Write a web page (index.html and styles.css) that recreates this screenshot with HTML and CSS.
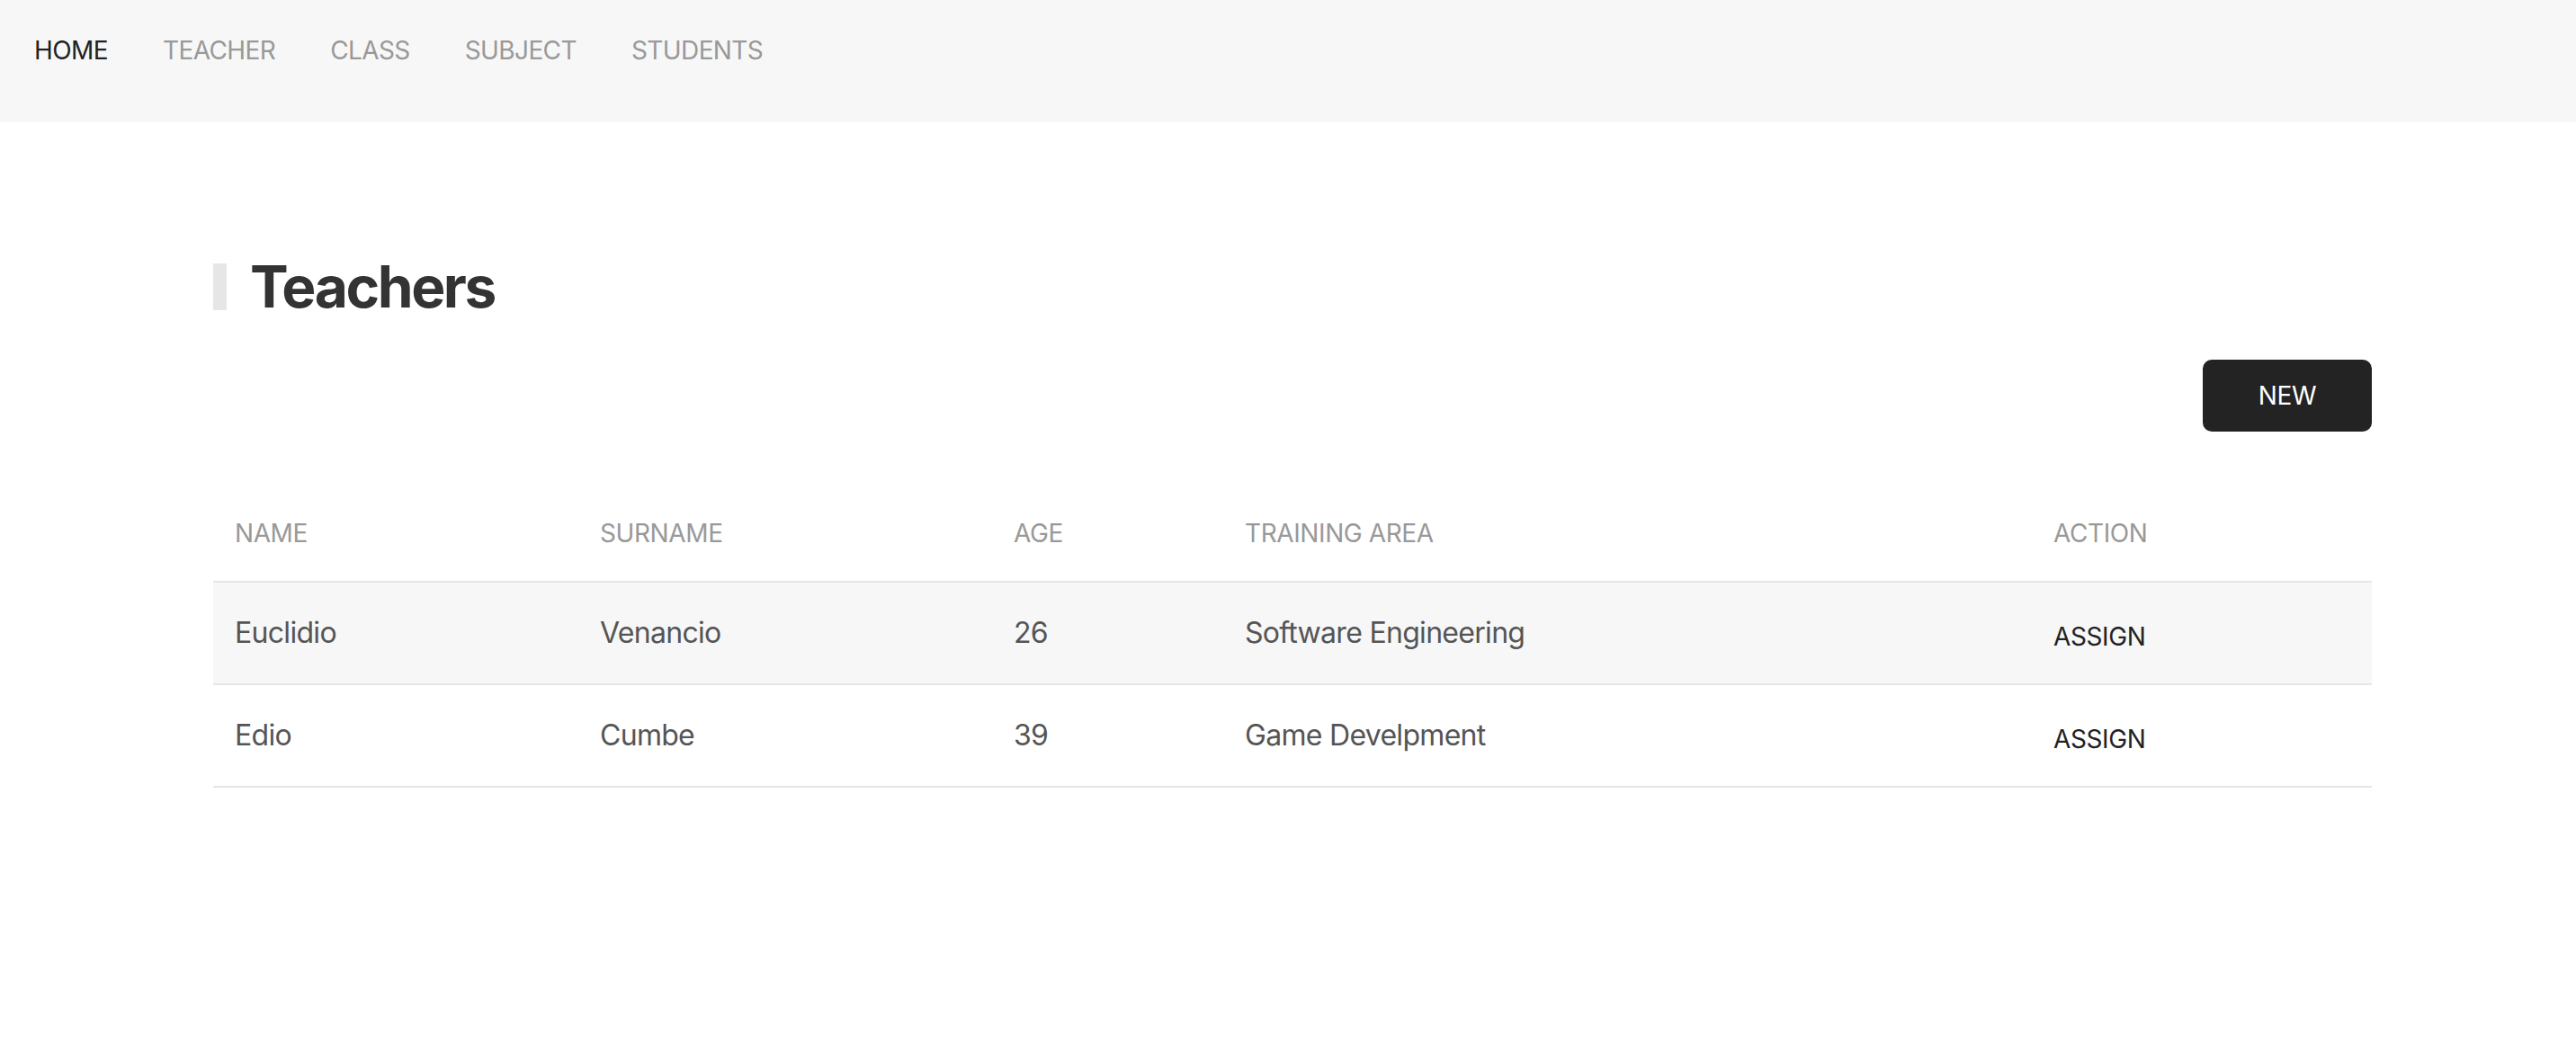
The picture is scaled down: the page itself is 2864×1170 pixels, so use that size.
FILE: index.html
```html
<!DOCTYPE html>
<html lang="en">
<head>
<meta charset="utf-8">
<title>Teachers</title>
<link rel="stylesheet" href="styles.css">
</head>
<body>
<nav class="topnav">
  <a class="nav-link active" href="#">HOME</a>
  <a class="nav-link" href="#">TEACHER</a>
  <a class="nav-link" href="#">CLASS</a>
  <a class="nav-link" href="#">SUBJECT</a>
  <a class="nav-link" href="#">STUDENTS</a>
</nav>
<main class="container">
  <h1 class="page-title">Teachers</h1>
  <div class="toolbar">
    <button class="btn-new" type="button">NEW</button>
  </div>
  <table class="data-table">
    <colgroup>
      <col class="c-name"><col class="c-surname"><col class="c-age"><col class="c-area"><col class="c-action">
    </colgroup>
    <thead>
      <tr><th>NAME</th><th>SURNAME</th><th>AGE</th><th>TRAINING AREA</th><th>ACTION</th></tr>
    </thead>
    <tbody>
      <tr class="striped"><td>Euclidio</td><td>Venancio</td><td>26</td><td>Software Engineering</td><td><button class="btn-assign" type="button">ASSIGN</button></td></tr>
      <tr><td>Edio</td><td>Cumbe</td><td>39</td><td>Game Develpment</td><td><button class="btn-assign" type="button">ASSIGN</button></td></tr>
    </tbody>
  </table>
</main>
</body>
</html>
```
FILE: styles.css
```css
html, body {
  margin: 0;
  padding: 0;
  background: #ffffff;
  font-family: Inter, "Noto Sans", "Liberation Sans", sans-serif;
}

.topnav {
  height: 136px;
  box-sizing: border-box;
  background: #f7f7f7;
  padding: 35px 0 0 38px;
  display: flex;
  align-items: flex-start;
  gap: 61px;
}

.nav-link {
  font-size: 28px;
  line-height: 42px;
  color: #999999;
  text-decoration: none;
  letter-spacing: -0.6px;
}

.nav-link.active {
  color: #222222;
}

.container {
  width: 2400px;
  margin: 0 0 0 237px;
  padding-top: 157px;
}

.page-title {
  margin: 0;
  border-left: 15px solid #e6e6e6;
  padding-left: 26px;
  font-size: 64px;
  line-height: 52px;
  font-weight: 700;
  color: #333333;
  letter-spacing: -2.4px;
}

.toolbar {
  display: flex;
  justify-content: flex-end;
  margin-top: 55px;
}

.btn-new {
  width: 188px;
  height: 80px;
  border: none;
  border-radius: 10px;
  background: #232323;
  color: #ffffff;
  font-family: inherit;
  font-size: 28px;
  letter-spacing: -0.4px;
  cursor: pointer;
}

.data-table {
  width: 2400px;
  margin-top: 60px;
  border-collapse: collapse;
  table-layout: fixed;
}

.c-name { width: 406px; }
.c-surname { width: 460px; }
.c-age { width: 257px; }
.c-area { width: 899px; }
.c-action { width: 378px; }

.data-table th {
  text-align: left;
  font-weight: 400;
  font-size: 28px;
  line-height: 42px;
  color: #999999;
  letter-spacing: -0.4px;
  padding: 32px 24px;
  border-bottom: 2px solid #e6e6e6;
}

.data-table td {
  font-size: 32px;
  line-height: 48px;
  color: #555555;
  letter-spacing: -0.7px;
  padding: 32px 24px;
  border-bottom: 2px solid #e6e6e6;
}

.data-table tr.striped td {
  background: #f7f7f7;
}

.btn-assign {
  border: none;
  background: transparent;
  padding: 0;
  margin-top: 4px;
  font-family: inherit;
  font-size: 28px;
  letter-spacing: -0.4px;
  color: #222222;
  cursor: pointer;
  vertical-align: middle;
}
```
